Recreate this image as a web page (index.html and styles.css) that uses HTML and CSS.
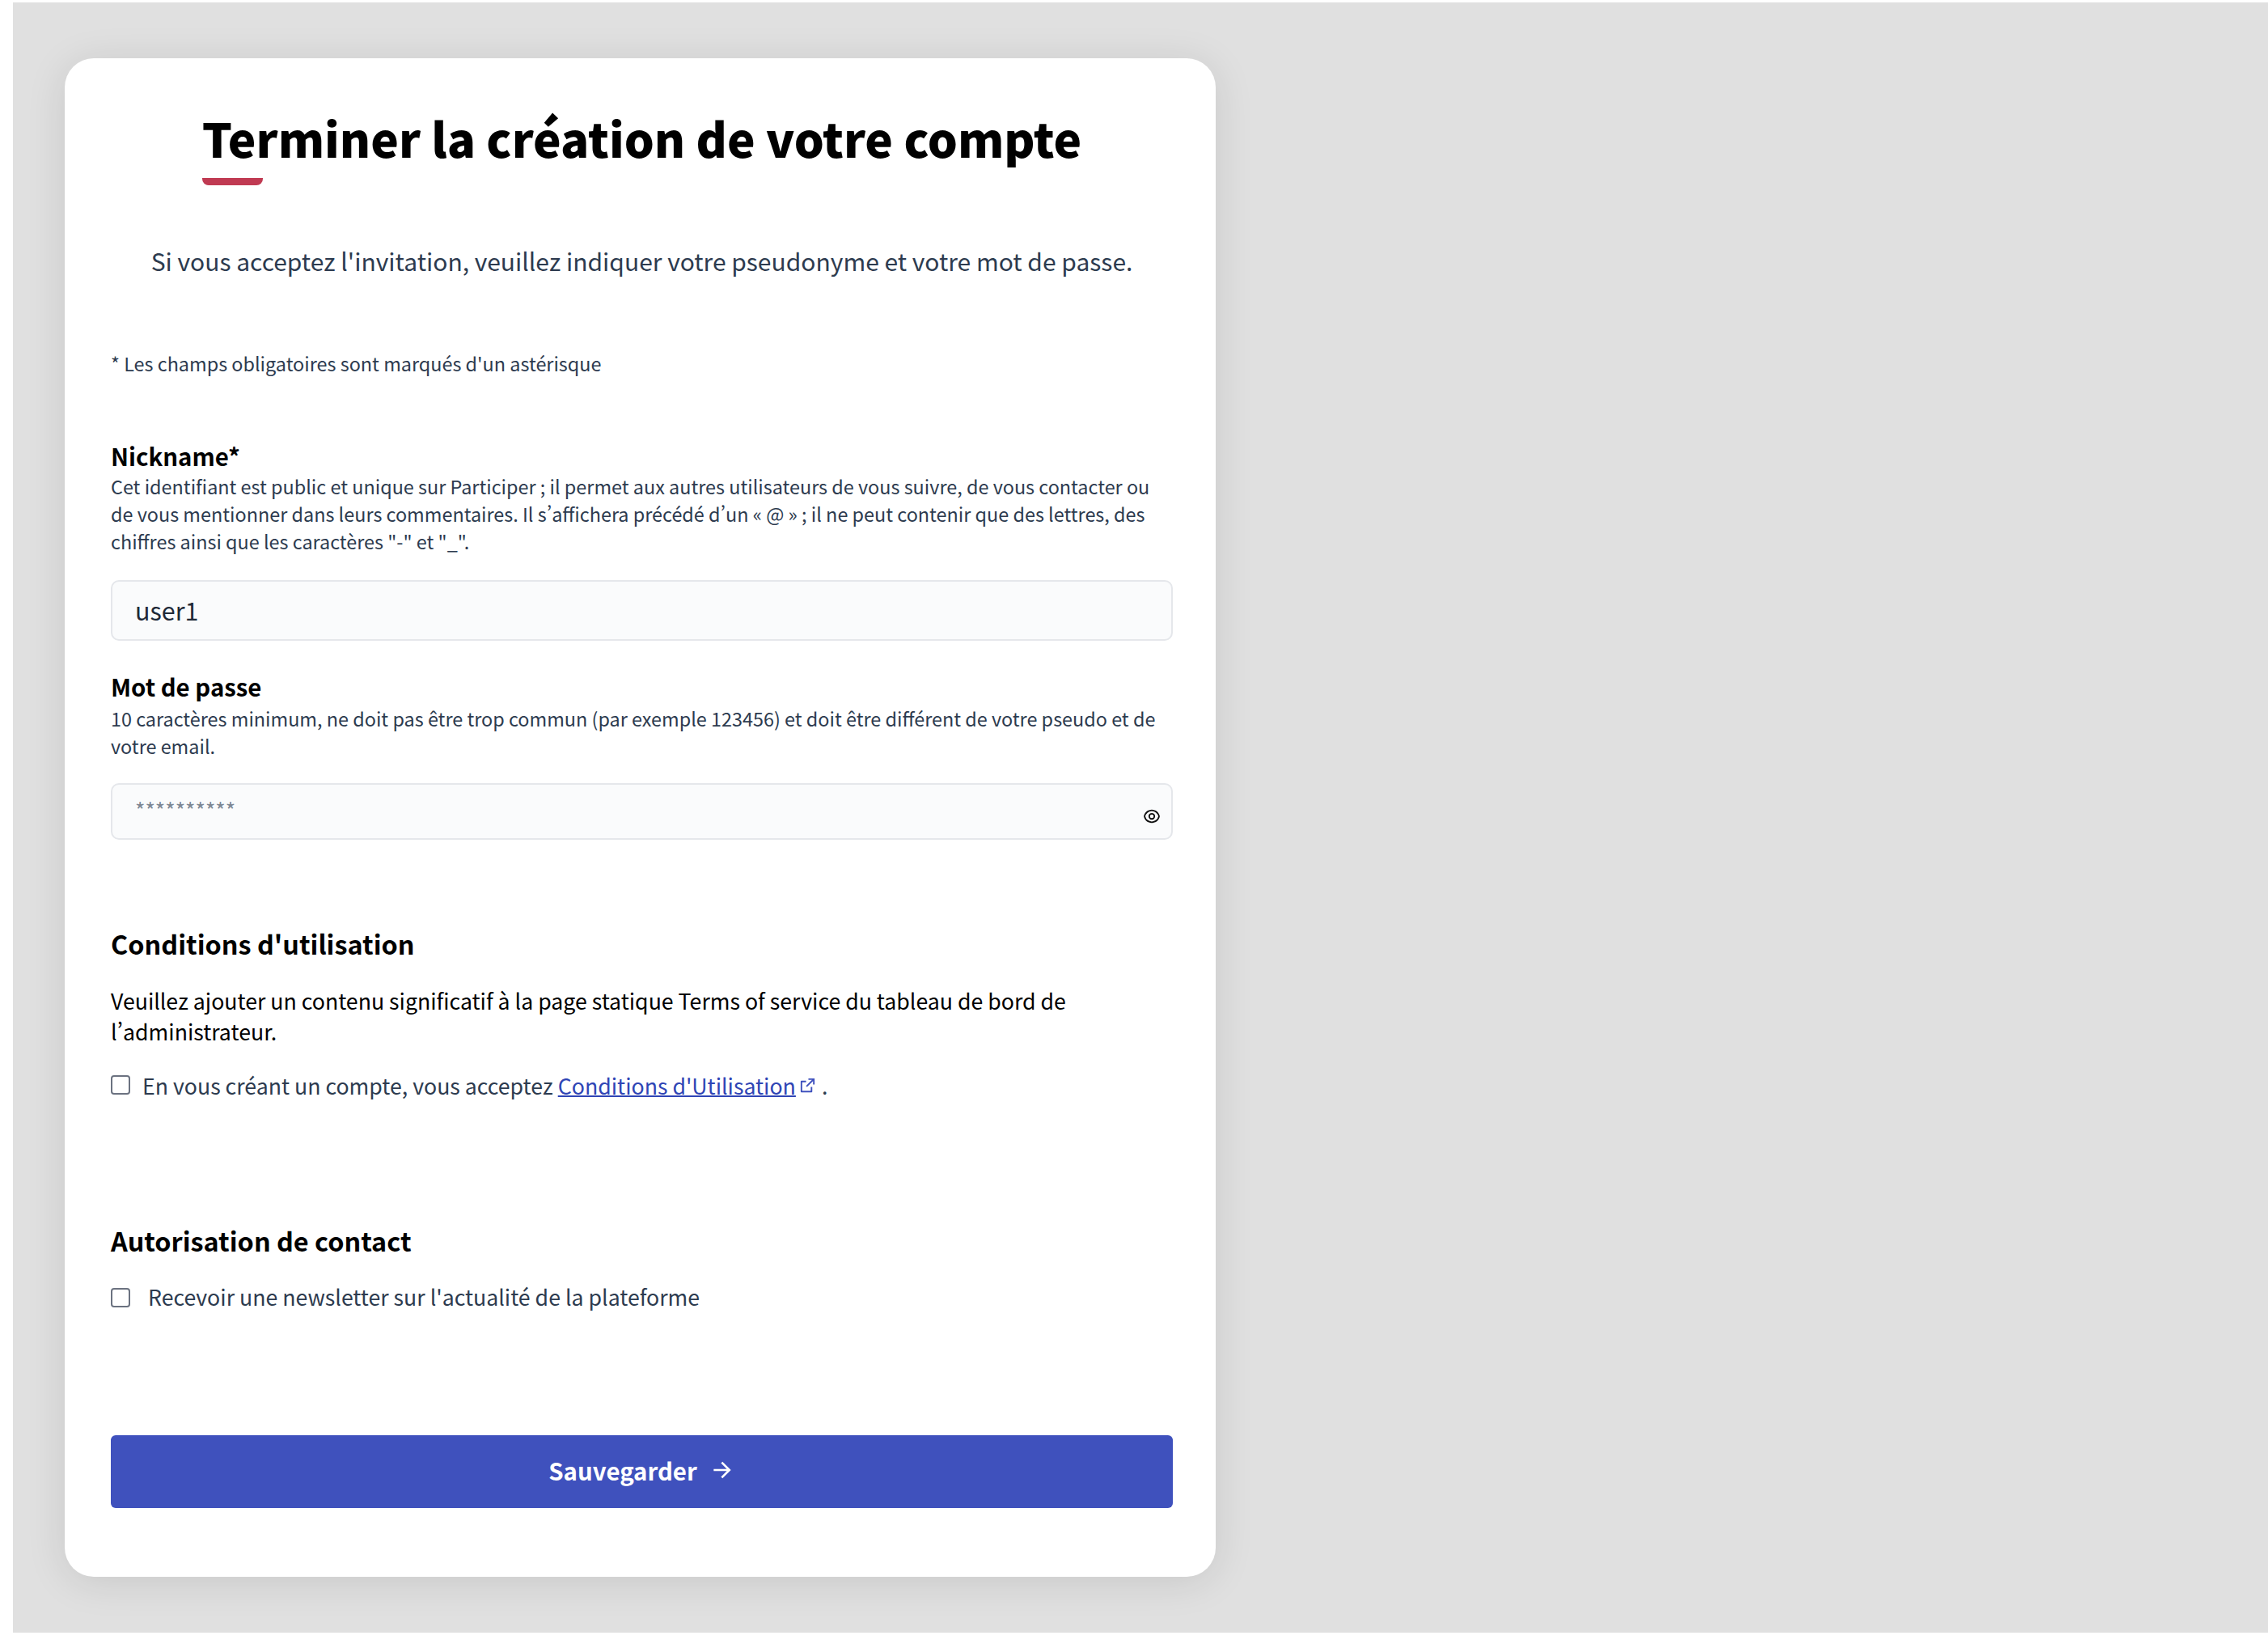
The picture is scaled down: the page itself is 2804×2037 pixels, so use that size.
FILE: index.html
```html
<!DOCTYPE html>
<html lang="fr">
<head>
<meta charset="UTF-8">
<meta name="viewport" content="width=device-width, initial-scale=1.0">
<title>Terminer la création de votre compte</title>
<link rel="stylesheet" href="styles.css">
</head>
<body>
<main class="page">
  <section class="card">
    <div class="title-wrap">
      <h1>Terminer la création de votre compte</h1>
      <div class="title-bar"></div>
    </div>
    <p class="intro">Si vous acceptez l'invitation, veuillez indiquer votre pseudonyme et votre mot de passe.</p>
    <p class="required">* Les champs obligatoires sont marqués d'un astérisque</p>

    <label class="label nick-label">Nickname*</label>
    <p class="help nick-help">Cet identifiant est public et unique sur Participer ; il permet aux autres utilisateurs de vous suivre, de vous contacter ou de vous mentionner dans leurs commentaires. Il s’affichera précédé d’un « @ » ; il ne peut contenir que des lettres, des chiffres ainsi que les caractères "-" et "_".</p>
    <div class="input nick-input">user1</div>

    <label class="label pass-label">Mot de passe</label>
    <p class="help pass-help">10 caractères minimum, ne doit pas être trop commun (par exemple 123456) et doit être différent de votre pseudo et de votre email.</p>
    <div class="input pass-input">
      <span class="dots">**********</span>
      <svg class="eye" viewBox="0 0 24 24" fill="#111"><path d="M12 3c5.392 0 9.878 3.88 10.819 9-.94 5.12-5.427 9-10.819 9-5.392 0-9.878-3.88-10.819-9C2.121 6.88 6.608 3 12 3zm0 16a9.005 9.005 0 0 0 8.777-7A9.005 9.005 0 0 0 3.223 12 9.005 9.005 0 0 0 12 19zm0-2.5a4.5 4.5 0 1 1 0-9 4.5 4.5 0 0 1 0 9zm0-2a2.5 2.5 0 1 0 0-5 2.5 2.5 0 0 0 0 5z"/></svg>
    </div>

    <h2 class="terms-title">Conditions d'utilisation</h2>
    <p class="terms-text">Veuillez ajouter un contenu significatif à la page statique Terms of service du tableau de bord de l’administrateur.</p>
    <div class="check-row terms-check">
      <span class="checkbox"></span>
      <span>En vous créant un compte, vous acceptez <a href="#">Conditions d'Utilisation</a><svg class="ext" viewBox="0 0 24 24" fill="#3f51bd"><path d="M10 6v2H5v11h11v-5h2v6a1 1 0 0 1-1 1H4a1 1 0 0 1-1-1V7a1 1 0 0 1 1-1h6zm11-3v8h-2V6.413l-7.793 7.794-1.414-1.414L17.585 5H13V3h8z"/></svg> .</span>
    </div>

    <h2 class="contact-title">Autorisation de contact</h2>
    <div class="check-row news-check">
      <span class="checkbox"></span>
      <span>Recevoir une newsletter sur l'actualité de la plateforme</span>
    </div>

    <button class="save">Sauvegarder
      <svg class="arrow" viewBox="0 0 24 24" fill="#fff"><path d="M16.172 11l-5.364-5.364 1.414-1.414L20 12l-7.778 7.778-1.414-1.414L16.172 13H4v-2z"/></svg>
    </button>
  </section>
</main>
</body>
</html>
```
FILE: styles.css
```css
html, body {
  margin: 0;
  padding: 0;
  background: #fff;
}

body {
  height: 2037px;
  overflow: hidden;
  font-family: "Noto Sans CJK SC", "Noto Sans", sans-serif;
  font-feature-settings: "pwid";
  color: #2d3b4f;
}

.page {
  margin: 3px 0 0 16px;
  height: 2015px;
  padding: 69px 0 0 64px;
  box-sizing: border-box;
  background: #e0e0e0;
  overflow: hidden;
}

.card {
  width: 1423px;
  height: 1877px;
  box-sizing: border-box;
  padding: 0 53px 0 57px;
  background: #fff;
  border-radius: 36px;
  box-shadow: 0 6px 50px rgba(0, 0, 0, 0.11);
  display: flow-root;
}

h1, h2, p {
  margin: 0;
}

.title-wrap {
  width: fit-content;
  margin: 56px auto 0;
}

h1 {
  font-size: 58.3px;
  line-height: 84px;
  font-weight: 900;
  color: #000;
  white-space: nowrap;
}

.title-bar {
  width: 75px;
  height: 9px;
  margin-top: 8px;
  background: #c03a52;
  border-radius: 0 0 8px 8px;
}

.intro {
  margin-top: 69px;
  font-size: 30px;
  line-height: 48px;
  text-align: center;
}

.required {
  margin-top: 83px;
  font-size: 23.4px;
  line-height: 40px;
}

.label {
  display: block;
  font-size: 29.4px;
  line-height: 40px;
  font-weight: 700;
  color: #000;
}

.nick-label {
  margin-top: 74px;
}

.pass-label {
  margin-top: 36px;
}

.help {
  font-size: 23.4px;
  line-height: 34px;
}

.nick-help {
  margin-top: 1px;
}

.pass-help {
  margin-top: 3px;
}

.input {
  position: relative;
  box-sizing: border-box;
  border: 2px solid #e5e7eb;
  border-radius: 10px;
  background: #fafbfc;
  padding: 0 28px;
}

.nick-input {
  height: 75px;
  margin-top: 31px;
  font-size: 30.5px;
  line-height: 71px;
  color: #1f2937;
}

.pass-input {
  height: 70px;
  margin-top: 29px;
  font-size: 26.6px;
  line-height: 30px;
  color: #7d8794;
  padding-top: 16px;
}

.eye {
  position: absolute;
  right: 13px;
  top: 28px;
  width: 22px;
  height: 22px;
}

.terms-title,
.contact-title {
  font-size: 32.4px;
  line-height: 48px;
  font-weight: 700;
  color: #000;
}

.terms-title {
  margin-top: 104px;
}

.terms-text {
  margin-top: 28px;
  font-size: 26.7px;
  line-height: 37.5px;
  color: #000;
}

.check-row {
  display: flex;
  align-items: flex-start;
  font-size: 26.7px;
  line-height: 40px;
}

.checkbox {
  flex: none;
  width: 24px;
  height: 24px;
  margin-top: 7px;
  box-sizing: border-box;
  border: 2px solid #6b7280;
  border-radius: 4px;
  background: #fff;
}

.terms-check {
  margin-top: 29px;
  gap: 15px;
}

.news-check {
  margin-top: 26px;
  gap: 22px;
}

.news-check .checkbox {
  margin-top: 9px;
}

a {
  color: #2f45b5;
  text-decoration: underline;
  text-decoration-thickness: 2px;
}

.ext {
  width: 23px;
  height: 23px;
  margin-left: 3px;
  vertical-align: 0;
}

.contact-title {
  margin-top: 147px;
}

.save {
  display: flex;
  align-items: center;
  justify-content: center;
  gap: 15px;
  width: 100%;
  height: 90px;
  margin-top: 151px;
  padding: 0 0 4px;
  border: none;
  border-radius: 6px;
  background: #3f51bd;
  color: #fff;
  font-family: inherit;
  font-size: 29.4px;
  font-weight: 700;
}

.arrow {
  width: 32px;
  height: 32px;
}
```
